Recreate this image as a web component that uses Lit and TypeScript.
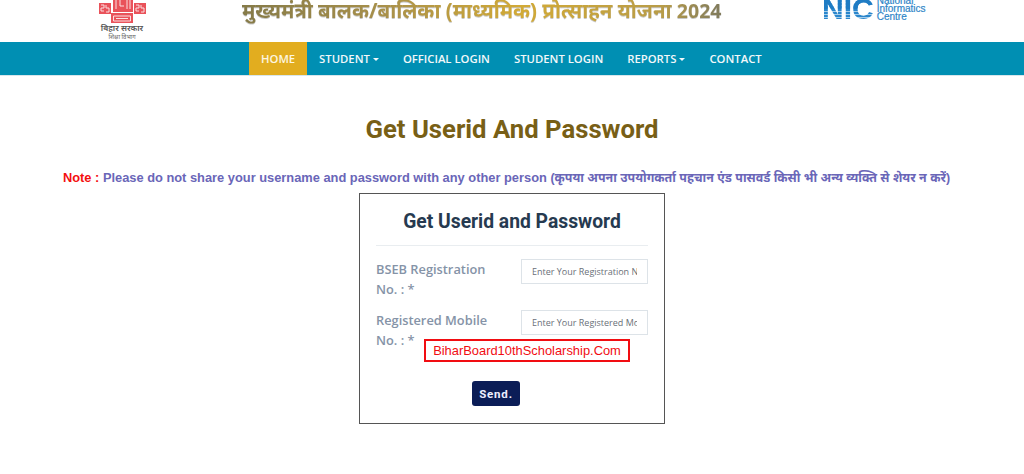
import { LitElement, html, css } from "lit";
import { customElement } from "lit/decorators.js";

@customElement("app-root")
export class AppRoot extends LitElement {
  static styles = css`
    :host { display: block; width: 1024px; height: 474px; overflow: hidden; background: #fff; font-family: Roboto, sans-serif; }
    .top { height: 42px; display: flex; overflow: hidden; }
    .gov { width: 64px; margin-left: 90px; display: flex; flex-direction: column; align-items: center; flex: none; color: #555; }
    .gov svg { display: block; flex: none; }
    .gov .a { font: 600 8.4px/9px "Noto Sans", sans-serif; height: 9px; color: #555; }
    .gov .b { font: 400 6px/8px "Noto Sans", sans-serif; height: 8px; margin-top: 1px; color: #666; }
    .scheme { flex: none; width: 560px; margin-left: 88px; margin-top: -5px; white-space: nowrap; font: 700 20.5px/30px "Noto Sans", "DejaVu Sans", sans-serif; background: linear-gradient(90deg, #857a48 0, #a8904a 25%, #d2aa36 50%, #b89c48 75%, #827c5c 85%); -webkit-background-clip: text; background-clip: text; color: transparent; height: 30px; filter: drop-shadow(0.5px 1px 0.6px rgba(0,0,0,.22)); }
    .year { font-size: 19.5px; }
    .nic { flex: none; margin-left: 20px; display: flex; gap: 3px; align-items: flex-start; }
    .nic .mark { font: 700 30px/30px "Liberation Sans", sans-serif; margin-top: -6px; height: 30px; background: linear-gradient(#1f7cc4 0 15px, transparent 15px), repeating-linear-gradient(180deg, #2a86cc 0 2px, #a5cdea 2px 3px); -webkit-background-clip: text; background-clip: text; color: transparent; }
    .nic .words { font: 400 10px/8px "Liberation Sans", sans-serif; color: #2f86c8; margin-top: -3px; -webkit-text-stroke: 0.2px #2f86c8; }
    nav { height: 34px; background: #008fb3; display: flex; padding-left: 249px; box-sizing: border-box; border-bottom: 1px solid #d8e6ec; }
    nav a { font: 600 11.3px/32px "Open Sans", sans-serif; color: #f2f8fa; padding: 1px 12px 0; display: flex; align-items: center; gap: 3px; white-space: nowrap; }
    nav a.active { background: #e2ad1f; color: #fdf6e0; }
    .caret { width: 0; height: 0; border-left: 3.5px solid transparent; border-right: 3.5px solid transparent; border-top: 3.5px solid #f2f8fa; }
    h1 { margin: 38px 0 0; text-align: center; font: 700 25.7px/30px Roboto, sans-serif; color: #785f16; }
    .note { margin-top: 25px; padding-right: 11px; text-align: center; white-space: nowrap; font: 700 12.85px/18px "Liberation Sans", "Noto Sans", sans-serif; color: #6a66b8; }
    .note b { color: #f40f10; }
    .hi { font-size: 12.4px; }
    .card { box-sizing: border-box; width: 306px; height: 231px; margin: 6px 0 0 359px; border: 1px solid #555; padding: 16px 16px 0; position: relative; }
    h2 { margin: 0; text-align: center; font: 700 19.3px/24px Roboto, sans-serif; color: #263a50; }
    hr { margin: 11px 0 0; border: 0; border-top: 1px solid #e9edf0; }
    .row { display: flex; justify-content: space-between; align-items: flex-start; }
    .r1 { margin-top: 13px; }
    .r2 { margin-top: 11px; }
    label { font: 600 12.8px/20px "Open Sans", sans-serif; color: #8593a7; white-space: nowrap; }
    input { box-sizing: border-box; width: 127px; height: 25px; padding: 0 10px; border: 1px solid #dde3e8; font: 400 9px "Open Sans", sans-serif; color: #5f6670; outline: 0; background: #fff; }
    input::placeholder { color: #6a7078; opacity: 1; }
    .stamp { position: absolute; left: 64px; top: 145px; width: 206px; height: 23px; box-sizing: border-box; border: 2px solid #f10d12; background: #fff; text-align: center; font: 400 12.9px/19px "Liberation Sans", sans-serif; color: #f10d12; }
    .send { position: absolute; left: 112px; top: 187px; width: 48px; height: 25px; border: 0; border-radius: 3px; background: #0b1d57; color: #eef; font: 700 11.5px/25px Roboto, sans-serif; letter-spacing: 0.8px; padding: 1px 0 0; }
  `;

  render() {
    return html`
      <div class="top">
        <div class="gov">
          <svg width="47" height="23" viewBox="0 0 47 23">
            <g fill="#e9525a">
              <rect x="0" y="3" width="12" height="11"/><rect x="35" y="3" width="12" height="11"/>
              <rect x="14" y="-2" width="20" height="14"/><rect x="12" y="13" width="22" height="10"/>
            </g>
            <g stroke="#fbdfe0" stroke-width="1" fill="none">
              <path d="M2 5h3v3H2v3h3M7 5v3h3M7 12h3v-4M37 5h3v3h-3v3h3M42 5v3h3M42 12h3v-4"/>
              <path d="M17 0v9M21 0v6h4M28 0v9M31 0v9"/>
              <path d="M14.5 16h17v5h-17zM17 18.5h12"/>
            </g>
          </svg>
          <div class="a">बिहार सरकार</div>
          <div class="b">शिक्षा विभाग</div>
        </div>
        <div class="scheme">मुख्यमंत्री बालक/बालिका (माध्यमिक) प्रोत्साहन योजना <span class="year">2024</span></div>
        <div class="nic">
          <div class="mark">NIC</div>
          <div class="words">National<br/>Informatics<br/>Centre</div>
        </div>
      </div>
      <nav>
        <a class="active">HOME</a>
        <a>STUDENT <span class="caret"></span></a>
        <a>OFFICIAL LOGIN</a>
        <a>STUDENT LOGIN</a>
        <a>REPORTS <span class="caret"></span></a>
        <a>CONTACT</a>
      </nav>
      <h1>Get Userid And Password</h1>
      <div class="note"><b>Note :</b> Please do not share your username and password with any other person <span class="hi">(कृपया अपना उपयोगकर्ता पहचान एंड पासवर्ड किसी भी अन्य व्यक्ति से शेयर न करें)</span></div>
      <div class="card">
        <h2>Get Userid and Password</h2>
        <hr/>
        <div class="row r1"><label>BSEB Registration<br/>No. : *</label><input placeholder="Enter Your Registration No."/></div>
        <div class="row r2"><label>Registered Mobile<br/>No. : *</label><input placeholder="Enter Your Registered Mobile No."/></div>
        <div class="stamp">BiharBoard10thScholarship.Com</div>
        <button class="send">Send.</button>
      </div>
    `;
  }
}
